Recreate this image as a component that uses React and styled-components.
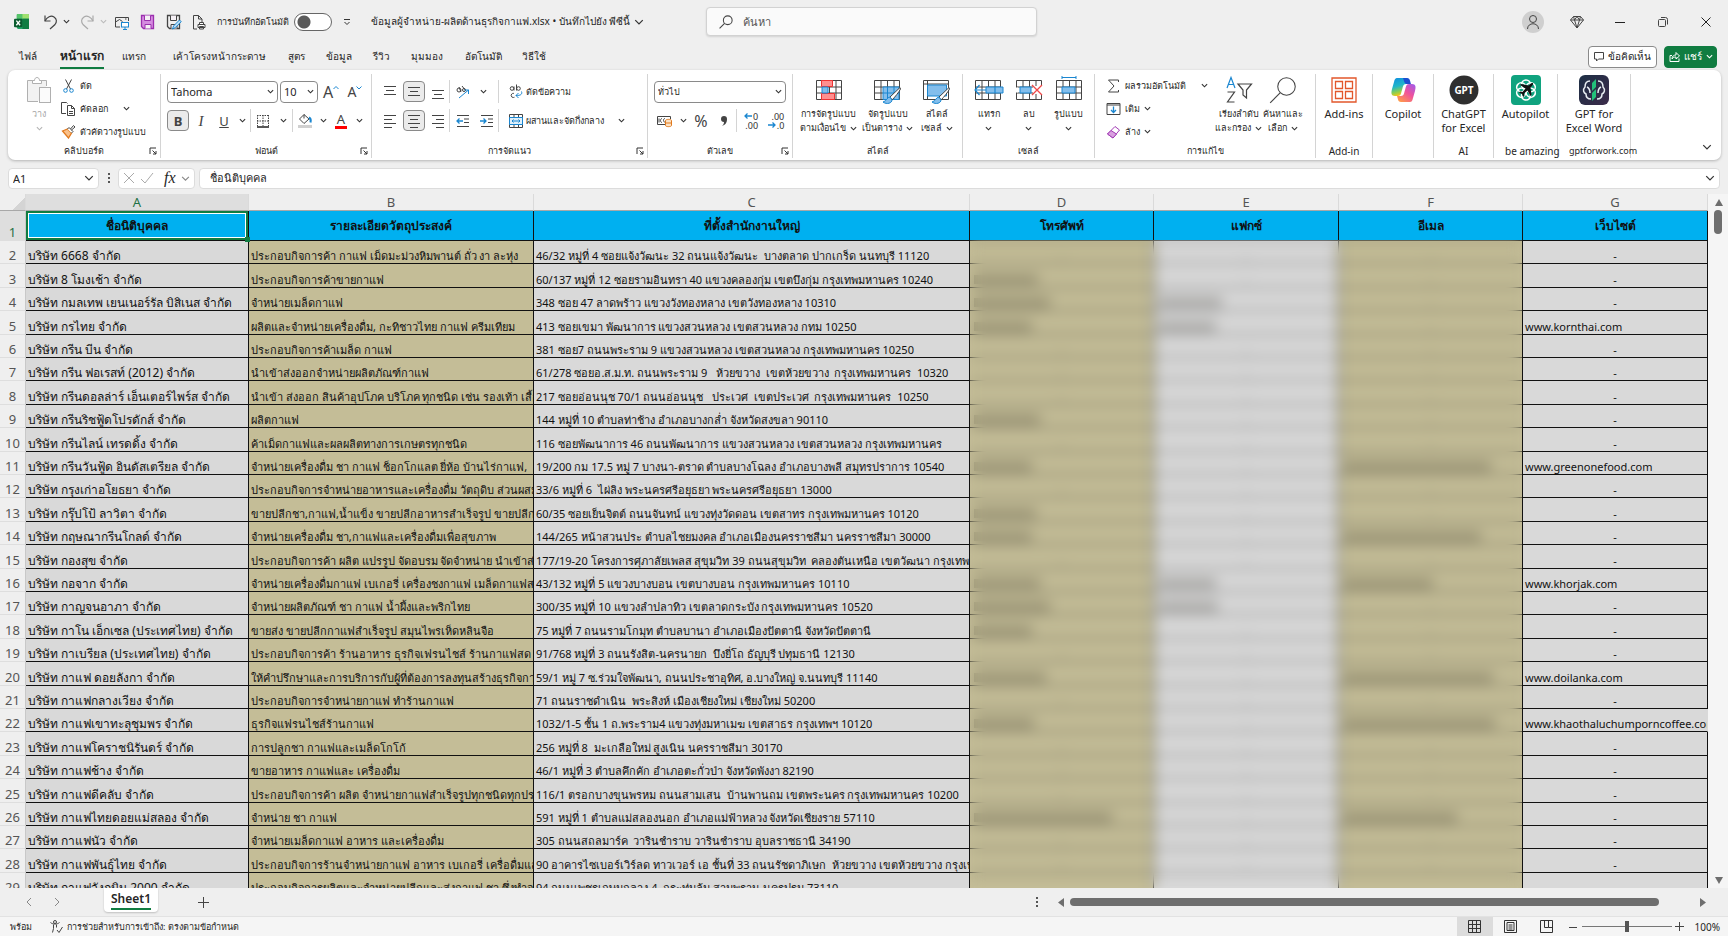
import React, { useState } from "react";
import styled, { createGlobalStyle, css } from "styled-components";

const GlobalStyle = createGlobalStyle`
  * { box-sizing: border-box; }
  html, body, #root { height: 100%; }
  body {
    margin: 0;
    overflow: hidden;
    background: #efefef;
    color: #262626;
    font-family: "Noto Sans", "Open Sans", Tahoma, sans-serif;
    font-size: 12px;
  }
  button, input, select { font: inherit; color: inherit; }
  svg { display: block; flex: none; }
`;

/* ---------- shared bits ---------- */

const Window = styled.div`
  display: flex;
  flex-direction: column;
  height: 100vh;
`;

const BareButton = styled.button`
  display: flex;
  align-items: center;
  justify-content: center;
  gap: ${(p) => p.$gap || 0}px;
  min-width: ${(p) => p.$w || 0}px;
  height: 21px;
  padding: 0;
  border: 0;
  background: none;
  white-space: nowrap;
`;

const Svg = ({ w = 16, h = w, box, children }) => (
  <svg
    width={w}
    height={h}
    viewBox={box || `0 0 ${w} ${h}`}
    fill="none"
    stroke="#444"
    strokeWidth="1"
    aria-hidden="true"
  >
    {children}
  </svg>
);

const Chevron = ({ size = 7, color = "#333", weight = 1.3 }) => (
  <Svg w={size} h={size} box="0 0 8 8">
    <path d="M1 2.5l3 3 3-3" stroke={color} strokeWidth={weight} />
  </Svg>
);

/* ---------- title bar ---------- */

const TitleBar = styled.header`
  display: grid;
  grid-template-columns: minmax(0, 706fr) minmax(200px, 331fr) minmax(0, 691fr);
  align-items: center;
  height: 43px;
`;

const QuickAccess = styled.div`
  display: flex;
  align-items: center;
  padding-left: 14px;
  white-space: nowrap;
  font-size: 9px;
`;

const QuickGroup = styled.div`
  display: flex;
  align-items: center;
  gap: ${(p) => p.$gap}px;
  margin-left: ${(p) => p.$left || 0}px;
`;

const Toggle = styled.input`
  appearance: none;
  width: 38px;
  height: 18px;
  margin: 0;
  border: 1px solid #666;
  border-radius: 9px;
  background: radial-gradient(circle at 9px 8px, #5a5a5a 6px, #fff 7px);
`;

const FileName = styled.span`
  font-size: 10px;
`;

const Search = styled.label`
  display: flex;
  align-items: center;
  gap: 10px;
  height: 29px;
  padding: 0 12px;
  border: 1px solid #d2d2d2;
  border-radius: 4px;
  background: #fafafa;
  box-shadow: 0 1px 2px rgba(0, 0, 0, 0.12);
  font-size: 11px;

  input {
    flex: 1;
    min-width: 0;
    padding: 0;
    border: 0;
    outline: 0;
    background: none;
  }
  input::placeholder { color: #555; opacity: 1; }
`;

const WindowButtons = styled.div`
  display: flex;
  justify-content: flex-end;
  align-items: center;
  gap: 23px;
  padding-right: 12px;
`;

const Avatar = styled.span`
  display: grid;
  place-items: center;
  width: 22px;
  height: 22px;
  border-radius: 50%;
  background: #cfcfcf;
`;

/* ---------- tabs ---------- */

const TabRow = styled.nav`
  display: flex;
  align-items: center;
  height: 27px;
  padding: 0 11px 0 19px;
`;

const TabList = styled.div`
  display: flex;
  flex: 1;
  gap: 18px;
`;

const Tab = styled.button`
  min-width: ${(p) => p.$w}px;
  height: 24px;
  padding: 0;
  border: 0;
  border-bottom: 2px solid ${(p) => (p.$active ? "#107c41" : "transparent")};
  background: none;
  font-size: ${(p) => (p.$active ? 12 : 10)}px;
  font-weight: ${(p) => (p.$active ? 700 : 400)};
  line-height: 20px;
  text-align: left;
  white-space: nowrap;
`;

const ActionButton = styled.button`
  display: flex;
  align-items: center;
  justify-content: center;
  gap: 4px;
  width: ${(p) => p.$w}px;
  height: 22px;
  margin-left: 7px;
  padding: 0;
  border: 1px solid ${(p) => (p.$primary ? "#107c41" : "#8a8a8a")};
  border-radius: 4px;
  background: ${(p) => (p.$primary ? "#107c41" : "#fff")};
  color: ${(p) => (p.$primary ? "#fff" : "#222")};
  font-size: 10px;
  white-space: nowrap;
`;

/* ---------- ribbon ---------- */

const Ribbon = styled.section`
  display: flex;
  height: 90px;
  margin: 0 7px 0 8px;
  padding: 4px 0 2px;
  border-radius: 7px;
  background: #fff;
  box-shadow: 0 1px 3px rgba(0, 0, 0, 0.25);
`;

const Group = styled.div`
  display: flex;
  flex-direction: column;
  flex: none;
  width: ${(p) => p.$w}px;
  border-right: 1px solid #d4d4d4;
`;

const GroupBody = styled.div`
  display: flex;
  flex: 1;
  justify-content: ${(p) => p.$justify || "flex-start"};
  gap: ${(p) => p.$gap || 0}px;
  padding: 0 ${(p) => p.$px || 0}px;
`;

const GroupFoot = styled.div`
  display: grid;
  grid-template-columns: 11px 1fr 11px;
  align-items: center;
  height: 14px;
  font-size: ${(p) => (p.$latin ? 10 : 9)}px;
  line-height: 14px;
  white-space: nowrap;

  span { grid-column: 2; justify-self: center; }
`;

const ThreeRows = styled.div`
  display: flex;
  flex-direction: column;
  font-size: 9px;

  > button { height: 23px; justify-content: flex-start; }
  > button > svg:first-child { width: 15px; }
`;

const TwoRows = styled.div`
  display: flex;
  flex-direction: column;
  gap: 8px;
  padding-top: 7px;
`;

const Row = styled.div`
  display: flex;
  align-items: center;
  gap: ${(p) => p.$gap || 0}px;
  height: 21px;
  font-size: 9px;
`;

const Divider = styled.i`
  width: 1px;
  height: 23px;
  background: #d4d4d4;
`;

const ToolButton = styled(BareButton)`
  width: 22px;
  ${(p) =>
    p.$on &&
    css`
      border: 1px solid #8a8a8a;
      border-radius: 4px;
      background: #ebebeb;
    `}
`;

const LargeButton = styled.button`
  display: flex;
  flex-direction: column;
  align-items: center;
  width: ${(p) => p.$w}px;
  height: 62px;
  padding: 1px 0 0;
  border: 0;
  background: none;
  color: ${(p) => (p.$muted ? "#a6a6a6" : "#262626")};
  font-size: ${(p) => (p.$latin ? 11 : 9)}px;
  line-height: 14px;
  white-space: nowrap;

  > svg { height: 30px; margin-bottom: 2px; }
  > span { display: flex; align-items: center; gap: 4px; height: 14px; }
`;

const Combo = styled.div`
  display: grid;
  align-items: center;
  width: ${(p) => p.$w}px;
  height: 22px;
  border: 1px solid #8a8a8a;
  border-radius: 4px;
  background: #fff;
  font-size: ${(p) => (p.$thai ? 9 : 11)}px;

  > * { grid-area: 1 / 1; }
  > svg { justify-self: end; margin-right: 3px; pointer-events: none; }
  select {
    width: 100%;
    padding: 0 3px;
    border: 0;
    appearance: none;
    background: none;
  }
`;

const RibbonEnd = styled.div`
  display: flex;
  flex: 1;
  align-items: flex-end;
  justify-content: flex-end;
  padding: 0 9px 6px 0;
`;

const BigLetter = styled.b`
  font-size: ${(p) => p.$size || 13}px;
  line-height: 18px;
  font-weight: ${(p) => (p.$bold ? 700 : 400)};
  font-style: ${(p) => (p.$italic ? "italic" : "normal")};
  text-decoration: ${(p) => (p.$under ? "underline" : "none")};
  font-family: ${(p) => (p.$italic ? '"Liberation Serif", serif' : "inherit")};
  border-bottom: ${(p) => (p.$bar ? `3px solid ${p.$bar}` : 0)};
  padding: 0 ${(p) => (p.$bar ? 2 : 0)}px;
  ${(p) => p.$bar && "line-height: 14px;"}
  color: #444;
`;

const TinyDigits = styled.span`
  display: flex;
  flex-direction: column;
  align-items: flex-end;
  font-size: 9px;
  line-height: 9px;
  color: #333;

  span { display: flex; align-items: center; gap: 1px; }
`;

/* ---------- formula bar ---------- */

const FormulaBar = styled.div`
  display: flex;
  align-items: center;
  height: 34px;
  padding: 2px 8px 0;
`;

const FieldBox = styled.div`
  display: flex;
  align-items: center;
  justify-content: space-between;
  gap: 4px;
  flex: ${(p) => (p.$grow ? 1 : "none")};
  width: ${(p) => (p.$w ? `${p.$w}px` : "auto")};
  height: 21px;
  margin-right: ${(p) => p.$mr || 0}px;
  padding: 0 4px;
  border: 1px solid #dcdcdc;
  border-radius: 4px;
  background: #fff;
  font-size: 11px;

  input {
    flex: 1;
    min-width: 0;
    padding: 0 ${(p) => (p.$grow ? 6 : 0)}px;
    border: 0;
    outline: 0;
    background: none;
  }
`;

const Fx = styled.i`
  margin-left: 4px;
  font: italic 16px/18px "Liberation Serif", serif;
`;

const Dots = styled.span`
  display: grid;
  gap: 2px;
  width: 2px;

  &::before, &::after, i { content: ""; width: 2px; height: 2px; background: #555; }
`;

/* ---------- sheet ---------- */

const SheetArea = styled.main`
  display: grid;
  grid-template-columns: minmax(0, 1fr) 20px;
  flex: 1;
  min-height: 0;
`;

const SheetView = styled.div`
  position: relative;
  overflow: hidden;
`;

const Grid = styled.table`
  width: 100%;
  table-layout: fixed;
  border-collapse: separate;
  border-spacing: 0;
  font-size: 11px;
`;

const ColLetter = styled.th`
  height: 17px;
  padding: 0;
  border-right: 1px solid #dadada;
  border-bottom: 1px solid #a8a8a8;
  background: ${(p) => (p.$active ? "#dedede" : "#efefef")};
  color: ${(p) => (p.$active ? "#1e7145" : "#555")};
  font-size: 13px;
  font-weight: 400;
  line-height: 16px;
`;

const Corner = styled(ColLetter)`
  background: linear-gradient(135deg, transparent 70%, #d4d4d4 70%) #efefef;
`;

const RowNumber = styled.th`
  padding: 0;
  border-bottom: 1px solid #dedede;
  border-right: 1px solid #c8c8c8;
  background: ${(p) => (p.$active ? "#dedede" : "#efefef")};
  color: ${(p) => (p.$active ? "#1e7145" : "#555")};
  font-size: 13px;
  font-weight: 400;
  line-height: 16px;
  vertical-align: bottom;
`;

const TitleCell = styled.td`
  position: relative;
  height: 30px;
  padding: 0;
  border-right: 1px solid #111;
  border-bottom: 1px solid #111;
  background: #00b0f0;
  color: #111;
  font-size: 12px;
  font-weight: 700;
  text-align: center;
  ${(p) => p.$selected && "box-shadow: inset 0 0 0 2px #107c41, inset 0 0 0 3px #fff;"}
`;

const FillHandle = styled.i`
  position: absolute;
  right: -2px;
  bottom: -2px;
  z-index: 1;
  width: 5px;
  height: 5px;
  background: #107c41;
`;

const DataRow = styled.tr`
  height: 23px;
  &:nth-child(5n + 3), &:nth-child(5n + 5) { height: 24px; }
`;

const Cell = styled.td`
  height: inherit;
  padding: 0 2px;
  overflow: hidden;
  border-right: 1px solid ${(p) => (p.$open ? "#d9d9d9" : "#111")};
  border-bottom: 1px solid #111;
  background: ${(p) => (p.$tan ? "#c4bd97" : "#d9d9d9")};
  color: #111;
  font-size: ${(p) => (p.$name ? 12 : 11)}px;
  line-height: 14px;
  text-align: ${(p) => (p.$center ? "center" : "left")};
  vertical-align: bottom;
  white-space: pre;
`;

const Smudge = styled.i`
  display: block;
  width: ${(p) => p.$w}px;
  height: 9px;
  margin: 0 0 3px 2px;
  background: rgba(40, 38, 28, 0.3);
`;

/* frosted sheet over the phone, fax and e-mail columns */
const PrivacyVeil = styled.div`
  position: absolute;
  top: 46px;
  right: 186px;
  bottom: 0;
  width: 552px;
  backdrop-filter: blur(7px);
`;

const VScroll = styled.div`
  display: flex;
  flex-direction: column;
  align-items: center;
  justify-content: space-between;
  padding: 4px 0 3px;
  background: #f5f5f5;

  > div { flex: 1; padding-top: 3px; }
`;

const Thumb = styled.i`
  display: block;
  border-radius: 4px;
  background: #6e6e6e;
  ${(p) => (p.$vertical ? "width: 8px; height: 24px;" : "flex: 1; height: 8px;")}
`;

/* ---------- bottom ---------- */

const SheetTabs = styled.footer`
  display: flex;
  align-items: center;
  height: 28px;
  padding: 0 20px 0 24px;
  background: #efefef;
`;

const SheetTab = styled.button`
  align-self: flex-start;
  height: 24px;
  margin: 0 35px 0 42px;
  padding: 0 7px;
  border: 0;
  border-radius: 0 0 4px 4px;
  background: #fff;
  box-shadow: 0 1px 2px rgba(0, 0, 0, 0.2);
  font-weight: 600;
  line-height: 18px;

  span { display: block; border-bottom: 2px solid #107c41; }
`;

const HScroll = styled.div`
  display: flex;
  align-items: center;
  gap: 5px;
  width: 652px;
  margin-left: 18px;
`;

const HTrack = styled.div`
  display: flex;
  flex: 1;
  padding-right: 35px;
`;

const Spacer = styled.div`
  flex: 1;
`;

const StatusBar = styled.footer`
  display: flex;
  align-items: center;
  height: 20px;
  padding: 0 8px 0 10px;
  border-top: 1px solid #e2e2e2;
  background: #f5f5f5;
  font-size: 9px;
  white-space: nowrap;
`;

const StatusText = styled.span`
  display: flex;
  align-items: center;
  gap: 4px;
  margin-right: 18px;
`;

const ZoomLevel = styled.span`
  margin-left: 10px;
  font-size: 10px;
`;

const ViewButton = styled.button`
  display: grid;
  place-items: center;
  width: 36px;
  height: 19px;
  padding: 0;
  border: 0;
  background: ${(p) => (p.$on ? "#dcdcdc" : "none")};
`;

const Zoom = styled.input`
  width: 90px;
  height: 14px;
  margin: 0 3px 0 1px;
  appearance: none;
  background: linear-gradient(#777, #777) center / 100% 1px no-repeat;

  &::-webkit-slider-thumb {
    appearance: none;
    width: 4px;
    height: 11px;
    background: #555;
  }
`;

/* ---------- icons ---------- */

const BLUE = "#1a86d0";
const SKY = "#83beec";

const ExcelLogo = () => (
  <Svg w={15} h={15} box="0 0 16 16">
    <g stroke="none">
      <rect x="3" y="0" width="13" height="16" rx="1.5" fill="#21a366" />
      <path d="M3 0h7v5H3z" fill="#55c46a" />
      <path d="M9 0h6a1 1 0 011 1v4H9z" fill="#9fe06f" />
      <path d="M9 5h7v11H9z" fill="#107c41" />
      <rect x="0" y="5" width="9" height="9" rx="1" fill="#0b5c2f" />
    </g>
    <path d="M2.5 7l4 5M6.500 7l-4 5" stroke="#fff" strokeWidth="1.4" />
  </Svg>
);

const Undo = ({ flip, color = "#444" }) => (
  <Svg w={15} h={16}>
    <g transform={flip ? "matrix(-1 0 0 1 15 0)" : undefined} stroke={color} strokeWidth="1.2">
      <path d="M2 1.500v5.500h5.500" />
      <path d="M2 7c2-4 6-6 9-4s3 5 1 7.500L7 15" />
    </g>
  </Svg>
);

const TouchIcon = () => (
  <Svg w={16} h={16}>
    <path d="M6 13H1.500V3.500h13V7M1.500 8l4-2.500 3 2M11 5h1.500" />
    <rect x="7.500" y="8.500" width="7" height="4.500" fill="#fff" stroke={BLUE} />
    <path d="M9 15.500h4M11 13v2" stroke={BLUE} />
  </Svg>
);

const SaveIcon = ({ color, fill, pen }) => (
  <Svg w={16} h={16}>
    <path d="M1.500 1.500h12v13h-10l-2-2z" fill={fill} stroke={color} strokeWidth="1.300" />
    <path d="M4.500 1.500v5h6v-5M5 14.500v-4h6v4" fill="#f5f0f5" stroke={color} />
    {pen && <path d="M6.500 15l1-3 6-6 1.700 1.700-6 6z" fill="#bfe0f7" stroke={BLUE} />}
  </Svg>
);

const PrintPreview = () => (
  <Svg w={14} h={16}>
    <path d="M5 15H1.500V1.500h5l3.500 3.500v3M6.500 1.500V5H10" />
    <path d="M6 13.500v-3h7v3zM7.500 10.500V8.500h4v2M7.500 12.500h4v2.500h-4z" fill="#fff" />
  </Svg>
);

const SearchGlyph = ({ size = 14 }) => (
  <Svg w={size} h={size} box="0 0 24 24">
    <circle cx="15" cy="9" r="7.500" strokeWidth={size > 20 ? 0.9 : 1.8} />
    <path d="M9.500 14.500L1 23" strokeWidth={size > 20 ? 1 : 1.8} />
  </Svg>
);

const Launcher = () => (
  <Svg w={8} h={8}>
    <path d="M1 7V1h6M3.500 3.500L7 7M7 4v3H4" stroke="#333" />
  </Svg>
);

const PasteIcon = () => (
  <Svg w={26} h={30}>
    <g stroke="#b0b0b0">
      <path d="M12 26.500H1.500v-21h19V11" fill="#f2f2f2" />
      <path d="M6.500 8.500v-3h2c0-4 5-4 5 0h2v3z" fill="#fff" />
      <rect x="13.500" y="12.500" width="11" height="15" fill="#fbfbfb" />
    </g>
  </Svg>
);

const CutIcon = () => (
  <Svg w={12} h={14}>
    <path d="M3 .5l5 9.500M9 .5L4 10" />
    <circle cx="3" cy="11.500" r="1.800" stroke={BLUE} />
    <circle cx="9" cy="11.500" r="1.800" stroke={BLUE} />
  </Svg>
);

const CopyIcon = () => (
  <Svg w={15} h={14}>
    <path d="M5 11.500H.5v-11h5l1 1M6.500 3.500h4l3 3v7h-7zM10.500 3.500v3h3M8 9.500h4M8 11.500h4" />
  </Svg>
);

const BrushIcon = () => (
  <Svg w={14} h={14}>
    <path d="M1 6l5-2 4 4-3 5z" fill="#f9c08a" stroke="#e07a1f" strokeWidth="1.300" />
    <path d="M6 4l1.500-1.500 4 4L10 8M9 4l3-3.500 1.500 1.500L10 5" fill="#fff" />
  </Svg>
);

const Lines = ({ rows, w = 14 }) => (
  <Svg w={w} h={14}>
    {rows.map(([x, y, len]) => (
      <path key={y} d={`M${x} ${y}.5h${len}`} />
    ))}
  </Svg>
);

const BordersIcon = () => (
  <Svg w={14} h={14}>
    <path d="M1.500 1v11M7 1v11M12.500 1v11M1 1.500h12M1 7h12" strokeDasharray="1.500 1" />
    <path d="M1 13h12" stroke="#222" strokeWidth="1.500" />
  </Svg>
);

const FillIcon = () => (
  <Svg w={15} h={15}>
    <path d="M6 1.500l5 4.500-5 4.500L1.500 6z" />
    <path d="M6 1.500v4" />
    <path d="M11 4.500c2 1 2 3 1.500 5" stroke={BLUE} strokeWidth="2" />
    <path d="M0 13.500h14" stroke="#d0d0d0" strokeWidth="3" />
  </Svg>
);

const OrientationIcon = () => (
  <Svg w={16} h={16}>
    <circle cx="4" cy="6" r="2" />
    <path d="M6 8L4 3M7 2l4 5" />
    <circle cx="9" cy="6" r="1.500" />
    <path d="M4 14l9.500-8M13.500 10V6h-4" stroke={BLUE} />
  </Svg>
);

const IndentIcon = ({ right }) => (
  <Svg w={14} h={14}>
    <path d="M1 1.500h12M8 5h5M8 8.500h5M1 12.500h12" />
    <path d={right ? "M0 7h6M3.500 4.500L6 7l-2.500 2.500" : "M1 7h6M3.500 4.500L1 7l2.500 2.500"} stroke={BLUE} strokeWidth="1.300" />
  </Svg>
);

const WrapIcon = () => (
  <Svg w={14} h={15}>
    <circle cx="3" cy="4.500" r="1.800" />
    <path d="M5 2.500v4M7.500 .5v6" />
    <circle cx="9.500" cy="4.500" r="1.800" />
    <path d="M5 9.500c-3-1-4 3.500-1 4 .8 0 1.500-.2 1.500-.5" />
    <path d="M12.500 7.500c1 3-1 4-5.500 4M9.500 9L7 11.500 9.500 14" stroke={BLUE} />
  </Svg>
);

const MergeIcon = () => (
  <Svg w={14} h={14}>
    <path d="M.5.500h13v13H.5zM5 .5v3M9.500.500v3M5 10.500v3M9.500 10.500v3" />
    <path d="M.5 3.500h13v7H.5z" fill="#dff0fb" stroke={BLUE} />
    <path d="M3 7h8M4.500 5.500L3 7l1.500 1.500M9.500 5.500L11 7l-1.500 1.500" stroke={BLUE} />
  </Svg>
);

const CurrencyIcon = () => (
  <Svg w={16} h={14}>
    <path d="M8 10.500H.5v-8h13V5M2 4.500v4M5 4.500c-2 0-2 4 0 4M8 4.500c-2 0-2 3 0 4" />
    <path d="M8.500 6.500c0-1.500 6-1.500 6 0v5c0 1.500-6 1.500-6 0zM8.500 9h6" fill="#fde2c4" stroke="#e07a1f" />
  </Svg>
);

const CommaIcon = () => (
  <Svg w={10} h={14}>
    <path d="M5 2a3 3 0 100 6c0 2-1 3-2 4 3-1 5-3 5-7 0-2-1-3-3-3z" fill="#444" stroke="none" />
  </Svg>
);

const SizeMark = ({ down }) => (
  <Svg w={6} h={14}>
    <path d={down ? "M.5 1.500L3 4l2.500-2.500" : "M.5 4L3 1.500 5.500 4"} stroke={BLUE} />
  </Svg>
);

const Arrow = ({ right }) => (
  <Svg w={8} h={8}>
    <path d={right ? "M0 4h7M4.500 1.500L7 4 4.500 6.500" : "M1 4h7M3.500 1.500L1 4l2.500 2.500"} stroke={BLUE} strokeWidth="1.300" />
  </Svg>
);

const gridLines = "M1.500 5.500h25v19h-25zM1.500 12h25M1.500 18h25M8 5.500v19M14.500 5.500v19M21 5.500v19";

const CondFormatIcon = () => (
  <Svg w={28} h={30}>
    <path d={gridLines} />
    <path d="M6.500 5.500h11v6h-11zM6.500 18.500h13v6h-13z" fill="#ff8f8f" stroke="#e33" />
    <path d="M7 12h6v6H7z" fill={SKY} stroke={BLUE} />
  </Svg>
);

const Brush = () => (
  <g>
    <path d="M27 12.500L17 22l2 3c3-3 7-8 8.500-11z" fill="#fff" />
    <path d="M17 22c-3 0-3 4-7 5 4 3 9 1 9-2z" fill={SKY} stroke={BLUE} />
  </g>
);

const TableFormatIcon = () => (
  <Svg w={30} h={30}>
    <path d={gridLines} />
    <path d="M10 12h16v12.500H10z" fill={SKY} stroke={BLUE} />
    <path d="M14.500 12v12M21 12v12M10 18h16" stroke={BLUE} />
    <Brush />
  </Svg>
);

const CellStyleIcon = () => (
  <Svg w={30} h={30}>
    <path d="M1.500 5.500h25v19h-25zM1.500 9h25M5.500 5.500v19" />
    <path d="M5.500 10h19v11h-19z" fill={SKY} stroke={BLUE} />
    <Brush />
  </Svg>
);

const InsertCellsIcon = () => (
  <Svg w={30} h={30}>
    <path d={gridLines} />
    <path d="M12 12h17v6H12z" fill={SKY} stroke={BLUE} />
    <path d="M21 12v6M1 15h11M5.500 10L1 15l4.500 5" stroke={BLUE} strokeWidth="1.200" />
  </Svg>
);

const DeleteCellsIcon = () => (
  <Svg w={28} h={30}>
    <path d={gridLines} />
    <path d="M0 12.500h3v5H0zM18 11h9v8h-9z" fill="#fff" stroke="none" />
    <path d="M5 12h11v6H5z" fill={SKY} stroke={BLUE} />
    <path d="M17 10l10 10M27 10L17 20" stroke="#f04848" strokeWidth="1.300" />
  </Svg>
);

const FormatCellsIcon = () => (
  <Svg w={28} h={30}>
    <path d={gridLines} />
    <path d="M7 12h13v6H7z" fill={SKY} stroke={BLUE} />
    <path d="M7 2.500h14M7 1v3M21 1v3" stroke={BLUE} />
  </Svg>
);

const SigmaIcon = () => (
  <Svg w={12} h={14}>
    <path d="M11 3V1H1l5.500 6L1 13h10v-2" />
  </Svg>
);

const FillDownIcon = () => (
  <Svg w={14} h={14}>
    <path d="M.5 1.500h13v11H.5zM.5 3h13" />
    <path d="M7 4.500v6M4.500 8L7 10.500 9.500 8" stroke={BLUE} strokeWidth="1.300" />
  </Svg>
);

const EraserIcon = () => (
  <Svg w={14} h={14}>
    <path d="M8.500 1.500L13 5l-6.500 8L1 9z" fill="#fff" stroke="#a23ab5" />
    <path d="M4.500 5.500L10 9l-3.500 4L1 9z" fill="#d9a0e0" stroke="#a23ab5" />
  </Svg>
);

const SortFilterIcon = () => (
  <Svg w={28} h={30}>
    <path d="M2 13L6 2.500 10 13M3.500 9.500h5" stroke={BLUE} strokeWidth="1.200" />
    <path d="M2.500 17h7l-7 10h7" strokeWidth="1.200" />
    <path d="M13 9h13.500l-5 6v8l-3.500-3v-5z" strokeWidth="1.200" />
  </Svg>
);

const AddinsIcon = () => (
  <Svg w={26} h={30}>
    <path d="M1 3h24v24H1zM4.500 6.500h7v7h-7zM14.500 6.500h7v7h-7zM4.500 16.500h7v7h-7zM14.500 16.500h7v7h-7z" stroke="#e2572b" strokeWidth="1.300" />
  </Svg>
);

const CopilotIcon = () => (
  <Svg w={27} h={30}>
    <defs>
      <linearGradient id="cpBlue" x1="0" y1="0" x2="0.300" y2="1">
        <stop offset="0" stopColor="#0f8de0" />
        <stop offset="0.500" stopColor="#1fb6c9" />
        <stop offset="0.800" stopColor="#8ecf4d" />
        <stop offset="1" stopColor="#f5c518" />
      </linearGradient>
      <linearGradient id="cpPink" x1="1" y1="0" x2="0.200" y2="1">
        <stop offset="0" stopColor="#9a5cf0" />
        <stop offset="0.500" stopColor="#f0529c" />
        <stop offset="1" stopColor="#ff9a4a" />
      </linearGradient>
    </defs>
    <g stroke="none">
      <path d="M7 3h9c3 0 3 3 4 6h-4c-3 0-3 3-4 6s-1 6-4 6H5c-4 0-4-3-3-7l2-7c.7-3 1.500-4 3-4z" fill="url(#cpBlue)" />
      <path d="M13 3h4c3 0 3 3 4 6h-5c-2-1-2-4-3-6z" fill="#1b4fd1" />
      <path d="M20 27h-9c-3 0-3-3-4-6h4c3 0 3-3 4-6s1-6 4-6h3c4 0 4 3 3 7l-2 7c-.7 3-1.500 4-3 4z" fill="url(#cpPink)" />
    </g>
  </Svg>
);

const GptIcon = () => (
  <Svg w={30} h={30}>
    <circle cx="15" cy="15" r="14.500" fill="#2f2f2f" stroke="none" />
    <text x="15" y="19" textAnchor="middle" fill="#fff" stroke="none" fontSize="10" fontWeight="700">GPT</text>
  </Svg>
);

const Knot = () => (
  <g stroke="#fff" strokeWidth="1.600">
    {[0, 60, 120, 180, 240, 300].map((a) => (
      <ellipse key={a} cx="15" cy="9.500" rx="4.500" ry="4.500" transform={`rotate(${a} 15 15)`} />
    ))}
  </g>
);

const AutopilotIcon = () => (
  <Svg w={30} h={30}>
    <rect x="0" y="0" width="30" height="30" rx="4" fill="#10a37f" stroke="none" />
    <Knot />
    <path d="M22 8c-1.500-.5-3 1-4.500 2.500L10 9l-1 1 5.500 3.500-3 3.500-2.500-.5-1 1 3 1.500 1.500 3 1-1-.5-2.500 3.500-3L19.500 21l1-1-1-7.500C21 11 22.500 9.500 22 8z" fill="#111" stroke="none" />
  </Svg>
);

const GptWorkIcon = () => (
  <Svg w={30} h={30}>
    <defs>
      <linearGradient id="gwBack" x1="0" y1="0" x2="1" y2="1">
        <stop offset="0" stopColor="#1d2f45" />
        <stop offset="1" stopColor="#3b2b4a" />
      </linearGradient>
    </defs>
    <rect x="0" y="0" width="30" height="30" rx="6" fill="url(#gwBack)" stroke="none" />
    <path d="M11 6c-4 0-5 3-5 6-3 3-1 6 1 7 0 4 3 5 5 5M8 12c2 1 3 3 3 6M19 6c4 0 5 3 5 6 3 3 1 6-1 7 0 4-3 5-5 5M22 12c-2 1-3 3-3 6" stroke="#e8eef2" strokeWidth="1.500" />
    <path d="M17 4v8l-4 4v-8zM17 14v8l-4 4v-8z" fill="#22c07a" stroke="none" />
  </Svg>
);

const Triangle = ({ dir }) => {
  const paths = { up: "M1 8l4-7 4 7z", down: "M1 1l4 7 4-7z", left: "M8 0v9L2 4.500z", right: "M1 0v9l6-4.500z" };
  return (
    <Svg w={9} h={9}>
      <path d={paths[dir]} fill="#6e6e6e" stroke="none" />
    </Svg>
  );
};

/* ---------- data ---------- */

const tabs = [
  ["ไฟล์", 23], ["หน้าแรก", 44], ["แทรก", 33], ["เค้าโครงหน้ากระดาษ", 97], ["สูตร", 20], ["ข้อมูล", 29],
  ["รีวิว", 20], ["มุมมอง", 36], ["อัตโนมัติ", 39], ["วิธีใช้", 26],
];

const columns = [
  { letter: "A", title: "ชื่อนิติบุคคล", width: 223 },
  { letter: "B", title: "รายละเอียดวัตถุประสงค์", width: 285 },
  { letter: "C", title: "ที่ตั้งสำนักงานใหญ่" },
  { letter: "D", title: "โทรศัพท์", width: 184 },
  { letter: "E", title: "แฟกซ์", width: 185 },
  { letter: "F", title: "อีเมล", width: 184 },
  { letter: "G", title: "เว็บไซต์", width: 185 },
];

// name, purpose, address, then optional site and the widths of the hidden contact values
const rows = [
  ["บริษัท 6668 จำกัด", "ประกอบกิจการค้า กาแฟ เม็ดมะม่วงหิมพานต์ ถั่ว งา ละหุ่ง", "46/32 หมู่ที่ 4 ซอยแจ้งวัฒนะ 32 ถนนแจ้งวัฒนะ  บางตลาด ปากเกร็ด นนทบุรี 11120"],
  ["บริษัท 8 โมงเช้า จำกัด", "ประกอบกิจการค้าขายกาแฟ", "60/137 หมู่ที่ 12 ซอยรามอินทรา 40 แขวงคลองกุ่ม เขตบึงกุ่ม กรุงเทพมหานคร 10240", { d: 64 }],
  ["บริษัท กมลเทพ เยนเนอร์รัล บิสิเนส จำกัด", "จำหน่ายเมล็ดกาแฟ", "348 ซอย 47 ลาดพร้าว แขวงวังทองหลาง เขตวังทองหลาง 10310", { d: 76, e: 64 }],
  ["บริษัท กรไทย จำกัด", "ผลิตและจำหน่ายเครื่องดื่ม, กะทิชาวไทย กาแฟ ครีมเทียม", "413 ซอยเขมา พัฒนาการ แขวงสวนหลวง เขตสวนหลวง กทม 10250", { d: 58, e: 58, site: "www.kornthai.com" }],
  ["บริษัท กรีน บีน จำกัด", "ประกอบกิจการค้าเมล็ด กาแฟ", "381 ซอย7 ถนนพระราม 9 แขวงสวนหลวง เขตสวนหลวง กรุงเทพมหานคร 10250"],
  ["บริษัท กรีน ฟอเรสท์ (2012) จำกัด", "นำเข้าส่งออกจำหน่ายผลิตภัณฑ์กาแฟ", "61/278 ซอยอ.ส.ม.ท. ถนนพระราม 9   ห้วยขวาง  เขตห้วยขวาง  กรุงเทพมหานคร  10320"],
  ["บริษัท กรีนดอลล่าร์ เอ็นเตอร์ไพร์ส จำกัด", "นำเข้า ส่งออก สินค้าอุปโภค บริโภค ทุกชนิด เช่น รองเท้า เสื้อผ้า", "217 ซอยอ่อนนุช 70/1 ถนนอ่อนนุช   ประเวศ  เขตประเวศ  กรุงเทพมหานคร  10250"],
  ["บริษัท กรีนริชฟู้ดโปรดักส์ จำกัด", "ผลิตกาแฟ", "144 หมู่ที่ 10 ตำบลท่าช้าง อำเภอบางกล่ำ จังหวัดสงขลา 90110", { d: 66 }],
  ["บริษัท กรีนไลน์ เทรดดิ้ง จำกัด", "ค้าเม็ดกาแฟและผลผลิตทางการเกษตรทุกชนิด", "116 ซอยพัฒนาการ 46 ถนนพัฒนาการ แขวงสวนหลวง เขตสวนหลวง กรุงเทพมหานคร"],
  ["บริษัท กรีนวันฟู้ด อินดัสเตรียล จำกัด", "จำหน่ายเครื่องดื่ม ชา กาแฟ ช็อกโกแลต ยี่ห้อ บ้านไร่กาแฟ,", "19/200 กม 17.5 หมู่ 7 บางนา-ตราด ตำบลบางโฉลง อำเภอบางพลี สมุทรปราการ 10540", { d: 58, f: 148, site: "www.greenonefood.com" }],
  ["บริษัท กรุงเก่าอโยธยา จำกัด", "ประกอบกิจการจำหน่ายอาหารและเครื่องดื่ม วัตถุดิบ ส่วนผสมอาหาร", "33/6 หมู่ที่ 6  ไผ่ลิง พระนครศรีอยุธยา พระนครศรีอยุธยา 13000"],
  ["บริษัท กรุ๊ปโป้ ลาวิตา จำกัด", "ขายปลีกชา,กาแฟ,น้ำแข็ง ขายปลีกอาหารสำเร็จรูป ขายปลีกเครื่องดื่ม", "60/35 ซอยเย็นจิตต์ ถนนจันทน์ แขวงทุ่งวัดดอน เขตสาทร กรุงเทพมหานคร 10120", { d: 62 }],
  ["บริษัท กฤษณากรีนโกลด์ จำกัด", "จำหน่ายเครื่องดื่ม ชา,กาแฟและเครื่องดื่มเพื่อสุขภาพ", "144/265 หน้าสวนประ ตำบลไชยมงคล อำเภอเมืองนครราชสีมา นครราชสีมา 30000", { d: 58, f: 138 }],
  ["บริษัท กองสุข จำกัด", "ประกอบกิจการค้า ผลิต แปรรูป จัดอบรม จัดจำหน่าย นำเข้าส่งออก", "177/19-20 โครงการศุภาลัยเพลส สุขุมวิท 39 ถนนสุขุมวิท  คลองตันเหนือ เขตวัฒนา กรุงเทพมหานคร"],
  ["บริษัท กอจาก จำกัด", "จำหน่ายเครื่องดื่มกาแฟ เบเกอรี่ เครื่องชงกาแฟ เมล็ดกาแฟสด", "43/132 หมู่ที่ 5 แขวงบางบอน เขตบางบอน กรุงเทพมหานคร 10110", { d: 66, e: 58, f: 90, site: "www.khorjak.com" }],
  ["บริษัท กาญจนอาภา จำกัด", "จำหน่ายผลิตภัณฑ์ ชา กาแฟ น้ำผึ้งและพริกไทย", "300/35 หมู่ที่ 10 แขวงลำปลาทิว เขตลาดกระบัง กรุงเทพมหานคร 10520", { d: 76, e: 60 }],
  ["บริษัท กาโน เอ็กเซล (ประเทศไทย) จำกัด", "ขายส่ง ขายปลีกกาแฟสำเร็จรูป สมุนไพรเห็ดหลินจือ", "75 หมู่ที่ 7 ถนนรามโกมุท ตำบลบานา อำเภอเมืองปัตตานี จังหวัดปัตตานี", { d: 58 }],
  ["บริษัท กาเบรียล (ประเทศไทย) จำกัด", "ประกอบกิจการค้า ร้านอาหาร ธุรกิจเฟรนไชส์ ร้านกาแฟสด", "91/768 หมู่ที่ 3 ถนนรังสิต-นครนายก  บึงยี่โถ ธัญบุรี ปทุมธานี 12130"],
  ["บริษัท กาแฟ ดอยลังกา จำกัด", "ให้คำปรึกษาและการบริการกับผู้ที่ต้องการลงทุนสร้างธุรกิจกาแฟ", "59/1 หมู่ 7 ซ.ร่วมใจพัฒนา, ถนนประชาอุทิศ, อ.บางใหญ่ จ.นนทบุรี 11140", { d: 72, f: 150, site: "www.doilanka.com" }],
  ["บริษัท กาแฟกลางเวียง จำกัด", "ประกอบกิจการจำหน่ายกาแฟ ทำร้านกาแฟ", "71 ถนนราชดำเนิน  พระสิงห์ เมืองเชียงใหม่ เชียงใหม่ 50200"],
  ["บริษัท กาแฟเขาทะลุชุมพร จำกัด", "ธุรกิจแฟรนไชส์ร้านกาแฟ", "1032/1-5 ชั้น 1 ถ.พระราม4 แขวงทุ่งมหาเมฆ เขตสาธร กรุงเทพฯ 10120", { d: 60, f: 152, site: "www.khaothaluchumporncoffee.com", open: true }],
  ["บริษัท กาแฟโคราชนิรันดร์ จำกัด", "การปลูกชา กาแฟและเมล็ดโกโก้", "256 หมู่ที่ 8  มะเกลือใหม่ สูงเนิน นครราชสีมา 30170"],
  ["บริษัท กาแฟช้าง จำกัด", "ขายอาหาร กาแฟและ เครื่องดื่ม", "46/1 หมู่ที่ 3 ตำบลคึกคัก อำเภอตะกั่วป่า จังหวัดพังงา 82190"],
  ["บริษัท กาแฟดีคลับ จำกัด", "ประกอบกิจการค้า ผลิต จำหน่ายกาแฟสำเร็จรูปทุกชนิดทุกประเภท", "116/1 ตรอกบางขุนพรหม ถนนสามเสน  บ้านพานถม เขตพระนคร กรุงเทพมหานคร 10200"],
  ["บริษัท กาแฟไทยดอยแม่สลอง จำกัด", "จำหน่าย ชา กาแฟ", "591 หมู่ที่ 1 ตำบลแม่สลองนอก อำเภอแม่ฟ้าหลวง จังหวัดเชียงราย 57110", { d: 138, f: 114 }],
  ["บริษัท กาแฟนัว จำกัด", "จำหน่ายเมล็ดกาแฟ อาหาร และเครื่องดื่ม", "305 ถนนสถลมาร์ค  วารินชำราบ วารินชำราบ อุบลราชธานี 34190"],
  ["บริษัท กาแฟพันธุ์ไทย จำกัด", "ประกอบกิจการร้านจำหน่ายกาแฟ อาหาร เบเกอรี่ เครื่อดื่มและอื่นๆ", "90 อาคารไซเบอร์เวิร์ลด ทาวเวอร์ เอ ชั้นที่ 33 ถนนรัชดาภิเษก  ห้วยขวาง เขตห้วยขวาง กรุงเทพมหานคร"],
  ["บริษัท กาแฟวังถนิน 2000 จำกัด", "ประกอบกิจการผลิตและจำหน่ายปลีกและส่งกาแฟ ชา ซึ่งทำจากพืช", "94 ถนนเพชรเกษมกลาง 4  กระทุ่มล้ม สามพราน นครปฐม 73110", { blank: true }],
];

/* ---------- parts ---------- */

const Foot = ({ label, launcher, latin }) => (
  <GroupFoot $latin={latin}>
    <span>{label}</span>
    {launcher && <Launcher />}
  </GroupFoot>
);

const Large = ({ icon, lines, w, latin, muted, drop }) => (
  <LargeButton $w={w} $latin={latin} $muted={muted}>
    {icon}
    {lines.map((line, i) => (
      <span key={i}>
        {line}
        {drop && i === lines.length - 1 && <Chevron color={muted ? "#b5b5b5" : "#333"} />}
      </span>
    ))}
  </LargeButton>
);

const Drop = ({ label, w = 20 }) => (
  <BareButton $w={w} aria-label={label}>
    <Chevron />
  </BareButton>
);

const ContactCell = ({ width, tan, blank }) => (
  <Cell $tan={tan} $center={!width}>
    {width ? <Smudge $w={width} /> : !blank && "-"}
  </Cell>
);

function RibbonGroups() {
  return (
    <Ribbon>
      <Group $w={153}>
        <GroupBody $px={14} $gap={5}>
          <Large w={34} icon={<PasteIcon />} lines={["วาง", ""]} muted drop />
          <ThreeRows>
            <BareButton $gap={4}><CutIcon />ตัด</BareButton>
            <BareButton $gap={4}><CopyIcon />คัดลอก<Svg w={7} /><Chevron /></BareButton>
            <BareButton $gap={4}><BrushIcon />ตัวคัดวางรูปแบบ</BareButton>
          </ThreeRows>
        </GroupBody>
        <Foot label="คลิปบอร์ด" launcher />
      </Group>

      <Group $w={211}>
        <GroupBody $px={6}>
          <TwoRows>
            <Row $gap={2}>
              <Combo $w={111}>
                <select aria-label="แบบอักษร"><option>Tahoma</option></select>
                <Chevron />
              </Combo>
              <Combo $w={38}>
                <select aria-label="ขนาด"><option>10</option></select>
                <Chevron />
              </Combo>
              <ToolButton aria-label="เพิ่มขนาด"><BigLetter $size={16}>A</BigLetter><SizeMark /></ToolButton>
              <ToolButton aria-label="ลดขนาด"><BigLetter $size={14}>A</BigLetter><SizeMark down /></ToolButton>
            </Row>
            <Row $gap={1}>
              <ToolButton $on aria-label="ตัวหนา"><BigLetter $bold>B</BigLetter></ToolButton>
              <ToolButton aria-label="ตัวเอียง"><BigLetter $italic $size={15}>I</BigLetter></ToolButton>
              <ToolButton aria-label="ขีดเส้นใต้"><BigLetter $under $size={13}>U</BigLetter></ToolButton>
              <Drop label="ลักษณะเส้นใต้" w={13} />
              <Divider />
              <ToolButton aria-label="เส้นขอบ"><BordersIcon /></ToolButton>
              <Drop label="ตัวเลือกเส้นขอบ" w={16} />
              <Divider />
              <ToolButton aria-label="สีเติม"><FillIcon /></ToolButton>
              <Drop label="เลือกสีเติม" w={12} />
              <ToolButton aria-label="สีแบบอักษร"><BigLetter $bar="#f00" $size={13}>A</BigLetter></ToolButton>
              <Drop label="เลือกสีแบบอักษร" w={12} />
            </Row>
          </TwoRows>
        </GroupBody>
        <Foot label="ฟอนต์" launcher />
      </Group>

      <Group $w={276}>
        <GroupBody $px={7}>
          <TwoRows>
            <Row $gap={2}>
              <ToolButton aria-label="ชิดบน"><Lines rows={[[1, 1, 12], [3, 5, 8], [1, 9, 12]]} /></ToolButton>
              <ToolButton $on aria-label="กึ่งกลางแนวตั้ง"><Lines rows={[[1, 2, 12], [3, 6, 8], [1, 10, 12]]} /></ToolButton>
              <ToolButton aria-label="ชิดล่าง"><Lines rows={[[1, 5, 12], [3, 9, 8], [1, 13, 12]]} /></ToolButton>
            </Row>
            <Row $gap={2}>
              <ToolButton aria-label="ชิดซ้าย"><Lines rows={[[1, 1, 12], [1, 5, 8], [1, 9, 12], [1, 13, 8]]} /></ToolButton>
              <ToolButton $on aria-label="กึ่งกลาง"><Lines rows={[[1, 1, 12], [3, 5, 8], [1, 9, 12], [3, 13, 8]]} /></ToolButton>
              <ToolButton aria-label="ชิดขวา"><Lines rows={[[1, 1, 12], [5, 5, 8], [1, 9, 12], [5, 13, 8]]} /></ToolButton>
            </Row>
          </TwoRows>
          <TwoRows>
            <Row $gap={2}>
              <Divider />
              <ToolButton aria-label="การวางแนว"><OrientationIcon /></ToolButton>
              <Drop label="ตัวเลือกการวางแนว" w={14} />
            </Row>
            <Row $gap={2}>
              <Divider />
              <ToolButton aria-label="ลดการเยื้อง"><IndentIcon /></ToolButton>
              <ToolButton aria-label="เพิ่มการเยื้อง"><IndentIcon right /></ToolButton>
            </Row>
          </TwoRows>
          <TwoRows>
            <Row $gap={10}>
              <Divider />
              <BareButton $gap={3}><WrapIcon />ตัดข้อความ</BareButton>
            </Row>
            <Row $gap={10}>
              <Divider />
              <BareButton $gap={3}><MergeIcon />ผสานและจัดกึ่งกลาง</BareButton>
              <Drop label="ตัวเลือกการผสาน" w={14} />
            </Row>
          </TwoRows>
        </GroupBody>
        <Foot label="การจัดแนว" launcher />
      </Group>

      <Group $w={145}>
        <GroupBody $px={6}>
          <TwoRows>
            <Row>
              <Combo $w={132} $thai>
                <select aria-label="รูปแบบตัวเลข"><option>ทั่วไป</option></select>
                <Chevron />
              </Combo>
            </Row>
            <Row $gap={1}>
              <ToolButton aria-label="รูปแบบบัญชี"><CurrencyIcon /></ToolButton>
              <Drop label="สกุลเงิน" w={12} />
              <ToolButton aria-label="เปอร์เซ็นต์"><BigLetter $size={16}>%</BigLetter></ToolButton>
              <ToolButton aria-label="จุลภาค"><CommaIcon /></ToolButton>
              <Divider />
              <BareButton $w={26} aria-label="เพิ่มทศนิยม"><TinyDigits><span><Arrow />0</span><span>.00</span></TinyDigits></BareButton>
              <BareButton $w={22} aria-label="ลดทศนิยม"><TinyDigits><span>.00</span><span><Arrow right />.0</span></TinyDigits></BareButton>
            </Row>
          </TwoRows>
        </GroupBody>
        <Foot label="ตัวเลข" launcher />
      </Group>

      <Group $w={170}>
        <GroupBody $justify="center">
          <Large w={60} icon={<CondFormatIcon />} lines={["การจัดรูปแบบ", "ตามเงื่อนไข"]} drop />
          <Large w={58} icon={<TableFormatIcon />} lines={["จัดรูปแบบ", "เป็นตาราง"]} drop />
          <Large w={40} icon={<CellStyleIcon />} lines={["สไตล์", "เซลล์"]} drop />
        </GroupBody>
        <Foot label="สไตล์" />
      </Group>

      <Group $w={132}>
        <GroupBody $justify="center">
          <Large w={40} icon={<InsertCellsIcon />} lines={["แทรก", ""]} drop />
          <Large w={40} icon={<DeleteCellsIcon />} lines={["ลบ", ""]} drop />
          <Large w={40} icon={<FormatCellsIcon />} lines={["รูปแบบ", ""]} drop />
        </GroupBody>
        <Foot label="เซลล์" />
      </Group>

      <Group $w={221}>
        <GroupBody $px={11}>
          <ThreeRows>
            <BareButton $w={109} $gap={4}><SigmaIcon />ผลรวมอัตโนมัติ<Svg w={7} /><Chevron /></BareButton>
            <BareButton $gap={4}><FillDownIcon />เติม<Chevron /></BareButton>
            <BareButton $gap={4}><EraserIcon />ล้าง<Chevron /></BareButton>
          </ThreeRows>
          <Large w={50} icon={<SortFilterIcon />} lines={["เรียงลำดับ", "และกรอง"]} drop />
          <Large w={44} icon={<SearchGlyph size={28} />} lines={["ค้นหาและ", "เลือก"]} drop />
        </GroupBody>
        <Foot label="การแก้ไข" />
      </Group>

      <Group $w={57}>
        <GroupBody $justify="center"><Large latin w={56} icon={<AddinsIcon />} lines={["Add-ins"]} /></GroupBody>
        <Foot latin label="Add-in" />
      </Group>
      <Group $w={61}>
        <GroupBody $justify="center"><Large latin w={60} icon={<CopilotIcon />} lines={["Copilot"]} /></GroupBody>
      </Group>
      <Group $w={60}>
        <GroupBody $justify="center"><Large latin w={58} icon={<GptIcon />} lines={["ChatGPT", "for Excel"]} /></GroupBody>
        <Foot latin label="AI" />
      </Group>
      <Group $w={64}>
        <GroupBody $justify="center"><Large latin w={60} icon={<AutopilotIcon />} lines={["Autopilot"]} /></GroupBody>
        <Foot latin label="be amazing" />
      </Group>
      <Group $w={73}>
        <GroupBody $justify="center"><Large latin w={70} icon={<GptWorkIcon />} lines={["GPT for", "Excel Word"]} /></GroupBody>
        <Foot label="gptforwork.com" />
      </Group>
      <RibbonEnd>
        <Chevron size={10} weight={1} />
      </RibbonEnd>
    </Ribbon>
  );
}

function Sheet() {
  return (
    <SheetView>
      <Grid>
        <colgroup>
          <col width="26" />
          {columns.map((c) => (
            <col key={c.letter} width={c.width} />
          ))}
        </colgroup>
        <thead>
          <tr>
            <Corner aria-label="เลือกทั้งหมด" />
            {columns.map((c) => (
              <ColLetter key={c.letter} $active={c.letter === "A"}>{c.letter}</ColLetter>
            ))}
          </tr>
        </thead>
        <tbody>
          <tr>
            <RowNumber $active>1</RowNumber>
            {columns.map((c) => (
              <TitleCell key={c.letter} $selected={c.letter === "A"}>
                {c.title}
                {c.letter === "A" && <FillHandle />}
              </TitleCell>
            ))}
          </tr>
          {rows.map(([name, purpose, address, extra = {}], i) => (
            <DataRow key={name}>
              <RowNumber>{i + 2}</RowNumber>
              <Cell $name>{name}</Cell>
              <Cell $tan>{purpose}</Cell>
              <Cell>{address}</Cell>
              <ContactCell tan width={extra.d} blank={extra.blank} />
              <ContactCell width={extra.e} blank={extra.blank} />
              <ContactCell tan width={extra.f} blank={extra.blank} />
              <Cell $center={!extra.site} $open={extra.open}>
                {extra.site || (!extra.blank && "-")}
              </Cell>
            </DataRow>
          ))}
        </tbody>
      </Grid>
      <PrivacyVeil />
    </SheetView>
  );
}

export default function App() {
  const [autosave, setAutosave] = useState(false);
  const [zoom, setZoom] = useState(50);

  return (
    <Window>
      <GlobalStyle />
      <TitleBar>
        <QuickAccess>
          <ExcelLogo />
          <QuickGroup $gap={5} $left={14}>
            <Undo />
            <Chevron />
          </QuickGroup>
          <QuickGroup $gap={5} $left={10}>
            <Undo flip color="#aaa" />
            <Chevron color="#bbb" />
          </QuickGroup>
          <QuickGroup $gap={10} $left={7}>
            <TouchIcon />
            <SaveIcon color="#9b2fae" fill="#d58be0" />
            <SaveIcon color="#444" fill="none" pen />
            <PrintPreview />
          </QuickGroup>
          <QuickGroup $gap={5} $left={11}>
            <label htmlFor="autosave">การบันทึกอัตโนมัติ</label>
            <Toggle
              id="autosave"
              type="checkbox"
              checked={autosave}
              onChange={() => setAutosave(!autosave)}
            />
          </QuickGroup>
          <QuickGroup $gap={4} $left={11}>
            <Svg w={8} h={8}><path d="M1 1.500h6M1.500 4l2.500 2.500L6.500 4" stroke="#333" /></Svg>
          </QuickGroup>
          <QuickGroup $gap={4} $left={20}>
            <FileName>ข้อมูลผู้จำหน่าย-ผลิตด้านธุรกิจกาแฟ.xlsx • บันทึกไปยัง พีซีนี้</FileName>
            <Chevron size={10} weight={1} />
          </QuickGroup>
        </QuickAccess>
        <Search>
          <SearchGlyph />
          <input type="search" placeholder="ค้นหา" aria-label="ค้นหา" />
        </Search>
        <WindowButtons>
          <Avatar>
            <Svg w={14} h={16}>
              <circle cx="7" cy="5" r="3.500" />
              <path d="M1.500 15c0-7 11-7 11 0" />
            </Svg>
          </Avatar>
          <BareButton $w={20} aria-label="พรีเมียม">
            <Svg w={14} h={14}><path d="M3.500 1.500h7L13.500 5 7 13 .5 5zM.5 5h13M4.500 5L7 13l2.500-8M3.500 1.500l1 3.500L7 1.500 9.500 5l1-3.500" /></Svg>
          </BareButton>
          <BareButton $w={20} aria-label="ย่อ"><Svg w={10} h={10}><path d="M0 5.500h10" stroke="#222" /></Svg></BareButton>
          <BareButton $w={20} aria-label="คืนค่า">
            <Svg w={10} h={10}><rect x=".5" y="2.500" width="7" height="7" rx="1" /><path d="M3 .5h4.500a2 2 0 012 2V7.500" /></Svg>
          </BareButton>
          <BareButton $w={20} aria-label="ปิด"><Svg w={10} h={10}><path d="M.5.500l9 9M9.500.500l-9 9" stroke="#222" /></Svg></BareButton>
        </WindowButtons>
      </TitleBar>

      <TabRow>
        <TabList>
          {tabs.map(([t, w], i) => (
            <Tab key={t} $w={w} $active={i === 1}>{t}</Tab>
          ))}
        </TabList>
        <ActionButton $w={69}>
          <Svg w={10} h={10}><path d="M.5.500h9v6.500H4.500L2.500 9V7h-2z" /></Svg>
          ข้อคิดเห็น
        </ActionButton>
        <ActionButton $w={53} $primary>
          <Svg w={11} h={11}><path d="M3 4.500H1v6h9v-3M3 8c0-3 2-4 4-4V1.500L10.500 5 7 8V6C5 6 4 6.500 3 8z" stroke="#fff" /></Svg>
          แชร์
          <Chevron color="#fff" />
        </ActionButton>
      </TabRow>

      <RibbonGroups />

      <FormulaBar>
        <FieldBox $w={91} $mr={9}>
          <input aria-label="กล่องชื่อ" defaultValue="A1" />
          <Chevron size={10} weight={1} />
        </FieldBox>
        <Dots><i /></Dots>
        <Svg w={8} />
        <FieldBox $w={77} $mr={4}>
          <Svg w={12} h={12}><path d="M1 1l10 10M11 1L1 11" stroke="#aaa" /></Svg>
          <Svg w={14} h={12}><path d="M1 7l4 4L13 1" stroke="#aaa" /></Svg>
          <Fx>fx</Fx>
          <Chevron size={9} color="#888" weight={1} />
        </FieldBox>
        <FieldBox $grow>
          <input aria-label="แถบสูตร" defaultValue="ชื่อนิติบุคคล" />
          <Chevron size={10} weight={1} />
        </FieldBox>
      </FormulaBar>

      <SheetArea>
        <Sheet />
        <VScroll>
          <Triangle dir="up" />
          <div><Thumb $vertical /></div>
          <Triangle dir="down" />
        </VScroll>
      </SheetArea>

      <SheetTabs>
        <BareButton $w={10} aria-label="แผ่นงานก่อนหน้า"><Svg w={8} h={10}><path d="M6 1L2 5l4 4" stroke="#888" /></Svg></BareButton>
        <Svg w={18} h={10} />
        <BareButton $w={10} aria-label="แผ่นงานถัดไป"><Svg w={8} h={10}><path d="M2 1l4 4-4 4" stroke="#888" /></Svg></BareButton>
        <SheetTab><span>Sheet1</span></SheetTab>
        <BareButton $w={20} aria-label="แผ่นงานใหม่"><Svg w={11} h={11}><path d="M5.500 0v11M0 5.500h11" stroke="#444" /></Svg></BareButton>
        <Spacer />
        <Dots><i /></Dots>
        <HScroll>
          <Triangle dir="left" />
          <HTrack><Thumb /></HTrack>
          <Triangle dir="right" />
        </HScroll>
      </SheetTabs>

      <StatusBar>
        <StatusText>พร้อม</StatusText>
        <StatusText>
          <Svg w={13} h={13}><circle cx="5" cy="2" r="1.500" /><path d="M.5 2.500c2 2 7 2 9 0M3.500 4.500v4l-1 4M6.500 4.500v3M7 10l2 2.500L12.500 7" /></Svg>
          การช่วยสำหรับการเข้าถึง: ตรงตามข้อกำหนด
        </StatusText>
        <Spacer />
        <ViewButton $on aria-label="ปกติ"><Svg w={13} h={13}><path d="M.5.500h12v12H.5zM4.500.500v12M8.500.500v12M.5 4.500h12M.5 8.500h12" stroke="#333" /></Svg></ViewButton>
        <ViewButton aria-label="เค้าโครงหน้ากระดาษ"><Svg w={13} h={13}><path d="M.5.500h12v12H.5zM3 2.500h7v8H3zM4.500 5h4M4.500 7h4M4.500 9h4" stroke="#333" /></Svg></ViewButton>
        <ViewButton aria-label="แสดงตัวอย่างตัวแบ่งหน้า"><Svg w={13} h={13}><path d="M.5.500h12v12H.5zM4.500.500v7h4v-7M8.500 7.500h4" stroke="#333" /></Svg></ViewButton>
        <BareButton $w={16} aria-label="ย่อ"><Svg w={8} h={8}><path d="M0 4.500h8" /></Svg></BareButton>
        <Zoom type="range" aria-label="ซูม" value={zoom} onChange={(e) => setZoom(+e.target.value)} />
        <BareButton $w={10} aria-label="ขยาย"><Svg w={9} h={9}><path d="M0 4.500h9M4.500 0v9" /></Svg></BareButton>
        <ZoomLevel>100%</ZoomLevel>
      </StatusBar>
    </Window>
  );
}
